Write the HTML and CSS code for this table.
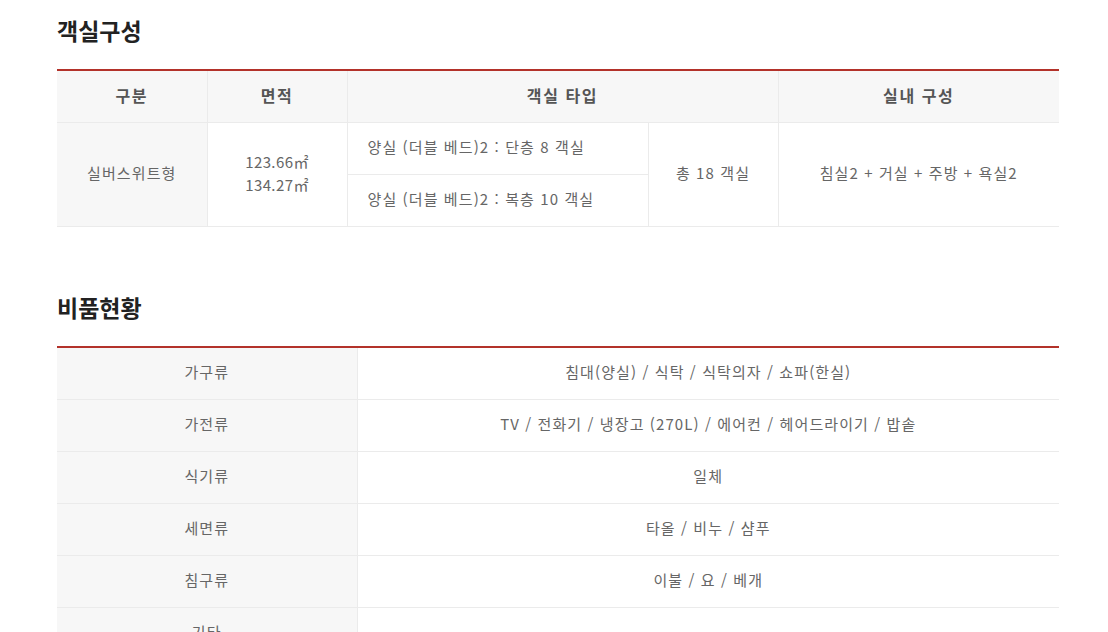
FILE: index.html
```html
<!DOCTYPE html>
<html lang="ko">
<head>
<meta charset="utf-8">
<link rel="stylesheet" href="styles.css">
</head>
<body>
<div class="wrap">
  <section class="sec first">
    <h2 class="title">객실구성</h2>
    <table class="tbl rooms">
      <colgroup>
        <col class="c1"><col class="c2"><col class="c3"><col class="c4"><col class="c5">
      </colgroup>
      <thead>
        <tr>
          <th>구분</th>
          <th>면적</th>
          <th colspan="2">객실 타입</th>
          <th>실내 구성</th>
        </tr>
      </thead>
      <tbody>
        <tr>
          <td rowspan="2" class="gray">실버스위트형</td>
          <td rowspan="2" class="area">123.66㎡<br>134.27㎡</td>
          <td class="left">양실 (더블 베드)2 : 단층 8 객실</td>
          <td rowspan="2">총 18 객실</td>
          <td rowspan="2">침실2 + 거실 + 주방 + 욕실2</td>
        </tr>
        <tr>
          <td class="left">양실 (더블 베드)2 : 복층 10 객실</td>
        </tr>
      </tbody>
    </table>
  </section>

  <section class="sec second">
    <h2 class="title">비품현황</h2>
    <table class="tbl items">
      <colgroup>
        <col class="k"><col class="v">
      </colgroup>
      <tbody>
        <tr><td class="gray">가구류</td><td>침대(양실) / 식탁 / 식탁의자 / 쇼파(한실)</td></tr>
        <tr><td class="gray">가전류</td><td>TV / 전화기 / 냉장고 (270L) / 에어컨 / 헤어드라이기 / 밥솥</td></tr>
        <tr><td class="gray">식기류</td><td>일체</td></tr>
        <tr><td class="gray">세면류</td><td>타올 / 비누 / 샴푸</td></tr>
        <tr><td class="gray">침구류</td><td>이불 / 요 / 베개</td></tr>
        <tr><td class="gray">기타</td><td>&nbsp;</td></tr>
      </tbody>
    </table>
  </section>
</div>
</body>
</html>
```

FILE: styles.css
```css
html, body {
  margin: 0;
  padding: 0;
  background: #fff;
}
body {
  font-family: "Noto Sans CJK KR", "Noto Sans", sans-serif;
  color: #666;
}
.wrap {
  width: 1002px;
  padding-left: 57px;
}
.sec.first {
  margin-top: 15px;
}
.sec.second {
  margin-top: 65px;
}
.title {
  margin: 0 0 24px;
  font-size: 23px;
  line-height: 30px;
  font-weight: 700;
  color: #222;
}
.tbl {
  width: 1002px;
  border-collapse: collapse;
  table-layout: fixed;
  border-top: 2px solid #b3322a;
}
.tbl th, .tbl td {
  height: 48px;
  padding: 0 0 3px;
  text-align: center;
  vertical-align: middle;
  border: 1px solid #ebebeb;
  font-size: 15px;
  line-height: 22px;
  letter-spacing: 1.1px;
}
.tbl tr > :first-child { border-left: 0; }
.tbl tr > :last-child { border-right: 0; }
.tbl th {
  background: #f7f7f7;
  color: #555;
  font-weight: 700;
  font-size: 16px;
  letter-spacing: 1.6px;
}
.tbl tr:first-child > * { border-top: 0; }
.rooms .c1 { width: 150px; }
.rooms .c2 { width: 140px; }
.rooms .c3 { width: 301px; }
.rooms .c4 { width: 130px; }
.rooms .c5 { width: 281px; }
.items .k { width: 300px; }
.items .v { width: 702px; }
.tbl .gray { background: #f7f7f7; }
.tbl .area { line-height: 23px; letter-spacing: 0.4px; }
.tbl .left {
  text-align: left;
  padding-left: 20px;
}
```
